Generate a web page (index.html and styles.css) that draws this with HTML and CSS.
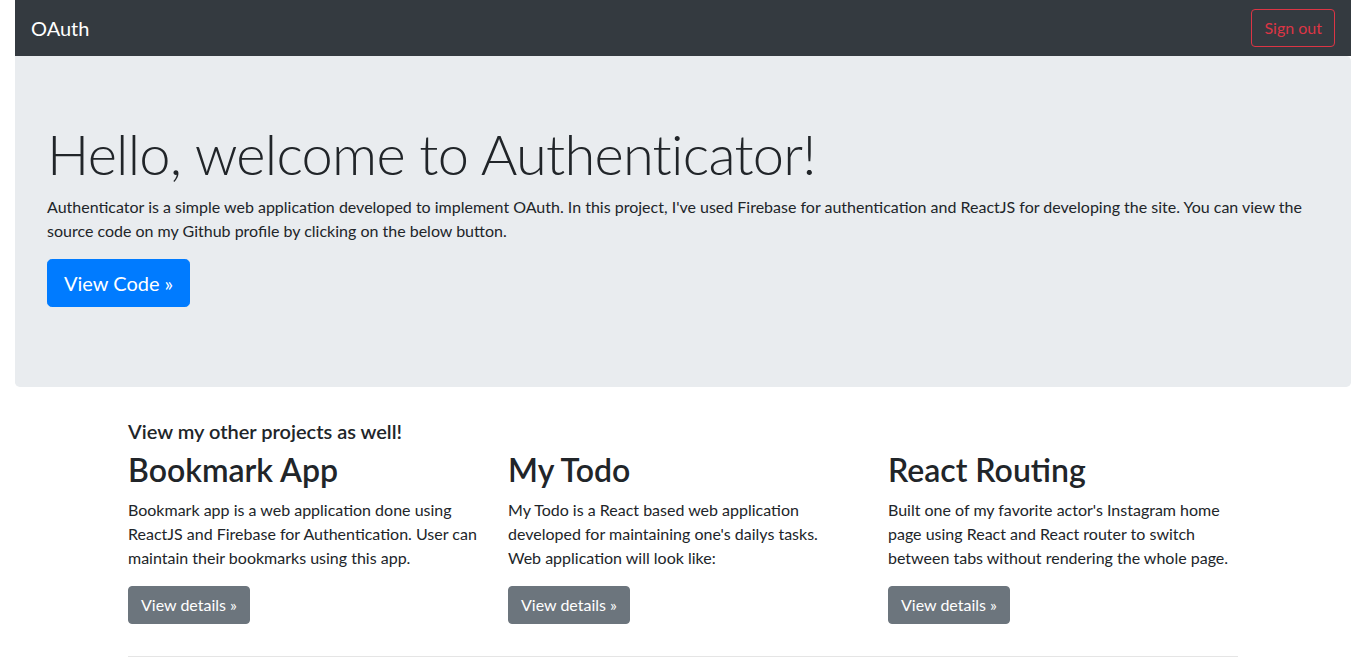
FILE: index.html
```html
<!DOCTYPE html>
<html lang="en">
<head>
<meta charset="utf-8">
<title>OAuth</title>
<link rel="stylesheet" href="styles.css">
</head>
<body>
<div class="fluid">
  <nav class="navbar">
    <a class="brand" href="#">OAuth</a>
    <button class="btn btn-outline-danger">Sign out</button>
  </nav>
  <div class="jumbotron">
    <h1 class="display">Hello, welcome to Authenticator!</h1>
    <p>Authenticator is a simple web application developed to implement OAuth. In this project, I've used Firebase for authentication and ReactJS for developing the site. You can view the source code on my Github profile by clicking on the below button.</p>
    <p><a class="btn btn-primary btn-lg" href="#">View Code »</a></p>
  </div>
</div>
<div class="container">
  <h5 class="subtitle">View my other projects as well!</h5>
  <div class="row">
    <div class="col">
      <h2>Bookmark App</h2>
      <p>Bookmark app is a web application done using ReactJS and Firebase for Authentication. User can maintain their bookmarks using this app.</p>
      <p><a class="btn btn-secondary" href="#">View details »</a></p>
    </div>
    <div class="col">
      <h2>My Todo</h2>
      <p>My Todo is a React based web application developed for maintaining one's dailys tasks.<br>Web application will look like:</p>
      <p><a class="btn btn-secondary" href="#">View details »</a></p>
    </div>
    <div class="col">
      <h2>React Routing</h2>
      <p>Built one of my favorite actor's Instagram home page using React and React router to switch between tabs without rendering the whole page.</p>
      <p><a class="btn btn-secondary" href="#">View details »</a></p>
    </div>
  </div>
  <hr class="divider">
</div>
</body>
</html>
```
FILE: styles.css
```css
* { box-sizing: border-box; }
html, body { margin: 0; }
body {
  font-family: Lato, "Liberation Sans", sans-serif;
  font-size: 16px;
  line-height: 1.5;
  color: #212529;
  background: #fff;
}
p { margin: 0 0 16px; }
h1, h2, h5 { margin: 0 0 8px; font-weight: 600; line-height: 1.2; }

.fluid { padding: 0 15px; }

.navbar {
  display: flex;
  align-items: center;
  justify-content: space-between;
  height: 56px;
  padding: 8px 16px;
  background: #343a40;
}
.brand {
  color: #fff;
  font-size: 20px;
  line-height: 30px;
  text-decoration: none;
}

.btn {
  display: inline-block;
  font-family: inherit;
  font-size: 16px;
  line-height: 24px;
  padding: 6px 12px;
  border: 1px solid transparent;
  border-radius: 4px;
  text-decoration: none;
  background: transparent;
  cursor: pointer;
}
.btn-outline-danger { color: #dc3545; border-color: #dc3545; }
.btn-primary { color: #fff; background: #007bff; border-color: #007bff; }
.btn-secondary { color: #fff; background: #6c757d; border-color: #6c757d; }
.btn-lg { font-size: 20px; line-height: 30px; padding: 8px 16px; border-radius: 4.8px; }

.jumbotron {
  background: #e9ecef;
  padding: 64px 32px;
  margin-bottom: 32px;
  border-radius: 0 4.8px 4.8px 4.8px;
}
.display {
  font-size: 56px;
  font-weight: 300;
  line-height: 1.2;
  letter-spacing: -0.75px;
}

.container {
  max-width: 1140px;
  margin: 0 auto;
  padding: 0 15px;
}
.subtitle { font-size: 20px; }
.row {
  display: grid;
  grid-template-columns: repeat(3, 1fr);
  column-gap: 30px;
}
.col h2 { font-size: 32px; }
.divider {
  margin: 16px 0;
  border: 0;
  border-top: 1px solid rgba(0,0,0,.1);
}
```
